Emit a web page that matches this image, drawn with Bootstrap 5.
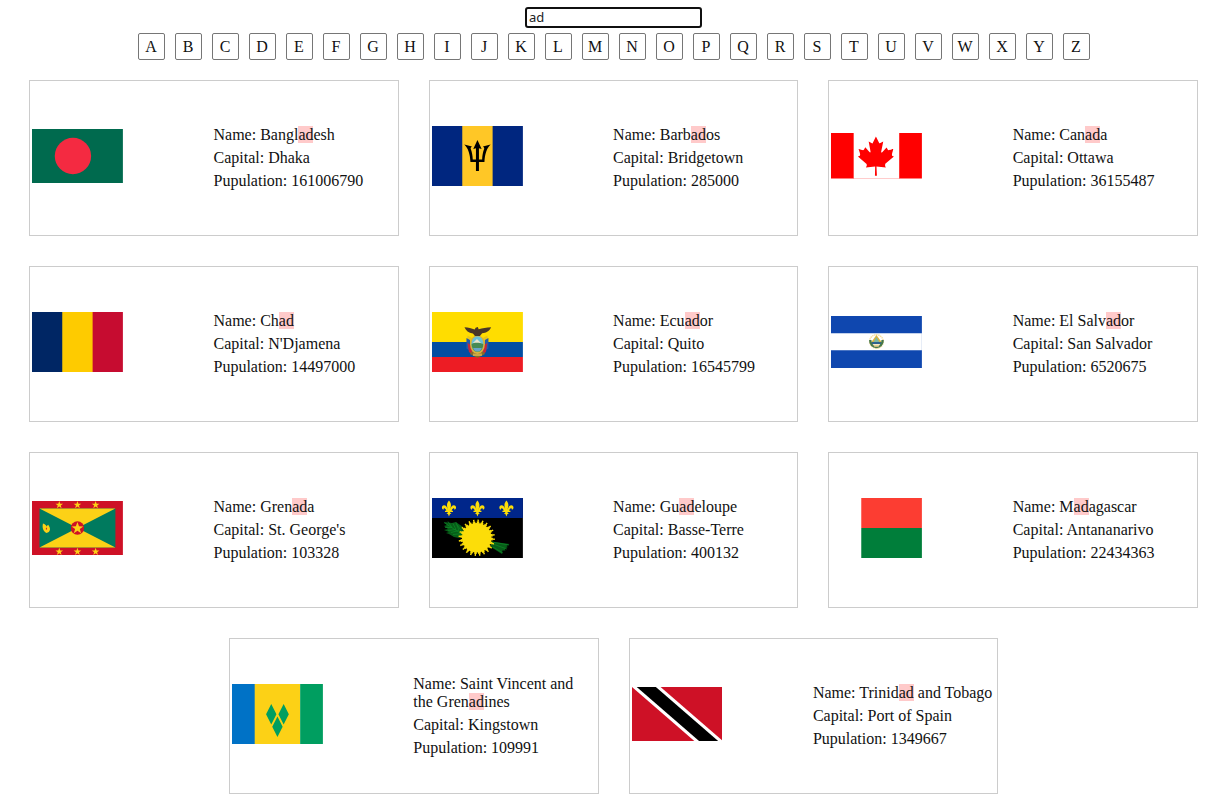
<!DOCTYPE html>
<html lang="en">
<head>
<meta charset="utf-8">
<meta name="viewport" content="width=device-width, initial-scale=1">
<title>Countries</title>
<link href="https://cdn.jsdelivr.net/npm/bootstrap@5.3.0/dist/css/bootstrap.min.css" rel="stylesheet">
<style>
body { font-family: "Liberation Serif", serif; font-size: 16px; line-height: 18px; color: #111; background: #fff; overflow: hidden; }
.search-box { width: 177px; height: 21px; margin: 7px 1px 5px 0; padding: 0 2px 2px; border: 2px solid #101010; border-radius: 3px; font: 13px "Noto Sans", sans-serif; line-height: 15px; color: #222; outline: 0; }
.letters { gap: 10px; }
.letter { width: 27px; height: 27px; padding: 0 1px 0 0; border: 1px solid #767676; border-radius: 2px; background: #fff; color: #111; line-height: 25px; }
.countries { gap: 30px; margin-top: 20px; padding: 0 30.1px 0 29.1px; }
.country { width: 369.6px; height: 156px; padding: 2px; border: 1px solid #ccc; }
.flag-col { width: 181.4px; flex: none; padding-bottom: 4px; }
.flag-col svg { width: 90.9px; display: block; }
.info p { margin: 0 0 5px; }
.info p:last-child { margin: 0; }
.hit { background: #ffcaca; }
</style>
</head>
<body>
<svg width="0" height="0" class="position-absolute" aria-hidden="true">
<defs>
<path id="star" d="M0-4 1-1.3 3.8-1.2 1.5.5 2.35 3.2 0 1.6-2.35 3.2-1.5.5-3.8-1.2-1-1.3z"/>
<path id="lis" d="M0-8C-3-4.5-2-2-.8 1.8-1.8-1-2.8-3.2-5-3.2-7.6-3.2-7.8.8-5.4 1.2-5.8-1-3.5-.5-2.7 2.2H-4V3.4H-1.1C-1.2 5-2.8 5.4-2.8 5.4L-1 5.6 0 8 1 5.6 2.8 5.4S1.2 5 1.1 3.4H4V2.2H2.7C3.5-.5 5.8-1 5.4 1.2 7.8.8 7.6-3.2 5-3.2 2.8-3.2 1.8-1 .8 1.8 2-2 3-4.5 0-8z"/>
</defs>
</svg>
<header class="d-flex flex-column align-items-center">
<input class="search-box" type="text" value="ad" aria-label="Search">
<div class="letters d-flex justify-content-center">
<button class="letter">A</button><button class="letter">B</button><button class="letter">C</button><button class="letter">D</button><button class="letter">E</button><button class="letter">F</button><button class="letter">G</button><button class="letter">H</button><button class="letter">I</button><button class="letter">J</button><button class="letter">K</button><button class="letter">L</button><button class="letter">M</button><button class="letter">N</button><button class="letter">O</button><button class="letter">P</button><button class="letter">Q</button><button class="letter">R</button><button class="letter">S</button><button class="letter">T</button><button class="letter">U</button><button class="letter">V</button><button class="letter">W</button><button class="letter">X</button><button class="letter">Y</button><button class="letter">Z</button>
</div>
</header>
<main class="countries d-flex flex-wrap justify-content-center">

<article class="country d-flex align-items-center">
<div class="flag-col"><svg height="54" viewBox="0 0 91 54" preserveAspectRatio="none"><path fill="#006a4e" d="M0 0h91v54H0z"/><circle cx="41" cy="27" r="18.2" fill="#f42a41"/></svg></div>
<div class="info w-50"><p>Name: Bangl<span class="hit">ad</span>esh</p><p>Capital: Dhaka</p><p>Pupulation: 161006790</p></div>
</article>

<article class="country d-flex align-items-center">
<div class="flag-col"><svg height="60" viewBox="0 0 91 60" preserveAspectRatio="none"><path fill="#00267f" d="M0 0h91v60H0z"/><path fill="#ffc726" d="M30.3 0h30.4v60H30.3z"/><path d="M45.5 14 41.300 23l2.700-.8V33.500h-3.200c-.1-4-.8-7.500-2-10.500-.4-1.300.5-2 1.200-2.500l-7.700-1.900c4 3.900 5.700 9.400 6.200 17.400h5.500v9h3v-9h5.500c.5-8 2.200-13.500 6.200-17.400L51 20.500c.7.500 1.600 1.200 1.200 2.500-1.200 3-1.900 6.500-2 10.500H47V22.200l2.700.8z"/></svg></div>
<div class="info w-50"><p>Name: Barb<span class="hit">ad</span>os</p><p>Capital: Bridgetown</p><p>Pupulation: 285000</p></div>
</article>

<article class="country d-flex align-items-center">
<div class="flag-col"><svg height="45.5" viewBox="0 0 91 45.5" preserveAspectRatio="none"><path fill="#fff" d="M0 0h91v45.5H0z"/><path fill="#f99" d="M22 45h47v.5H22z"/><path fill="red" d="M0 0h22.7v45.5H0zM68.3 0H91v45.5H68.3z"/><path fill="red" transform="translate(.5 -9.900) scale(.141)" d="M201 232l-13.3 4.4 61.4 54c4.7 13.7-1.6 17.8-5.6 25l66.6-8.4-1.6 67 13.9-.3-3.1-66.6 66.7 8c-4.1-8.7-7.8-13.3-4-27.2l61.3-51-10.7-4c-8.8-6.8 3.8-32.6 5.6-48.9 0 0-35.7 12.3-38 5.8l-9.2-17.5-32.6 35.8c-3.5.9-5-.5-5.9-3.5l15-74.8-23.8 13.4c-2 .9-4 .1-5.2-2.2l-23-46-23.6 47.8c-1.8 1.7-3.6 1.9-5 .7L264 130.8l13.7 74.1c-1.1 3-3.7 3.8-6.7 2.2l-31.2-35.3c-4 6.5-6.8 17.1-12.2 19.5-5.4 2.3-23.5-4.5-35.6-7 4.2 14.8 17 39.6 9 47.7z"/></svg></div>
<div class="info w-50"><p>Name: Can<span class="hit">ad</span>a</p><p>Capital: Ottawa</p><p>Pupulation: 36155487</p></div>
</article>

<article class="country d-flex align-items-center">
<div class="flag-col"><svg height="60" viewBox="0 0 91 60" preserveAspectRatio="none"><path fill="#002664" d="M0 0h31v60H0z"/><path fill="#fecb00" d="M30.3 0h31v60h-31z"/><path fill="#c60c30" d="M60.7 0H91v60H60.7z"/></svg></div>
<div class="info w-50"><p>Name: Ch<span class="hit">ad</span></p><p>Capital: N'Djamena</p><p>Pupulation: 14497000</p></div>
</article>

<article class="country d-flex align-items-center">
<div class="flag-col"><svg height="60" viewBox="0 0 91 60" preserveAspectRatio="none"><path fill="#fd0" d="M0 0h91v30H0z"/><path fill="#034ea2" d="M0 30h91v15H0z"/><path fill="#ed1c24" d="M0 45h91v15H0z"/>
<path fill="#e8c51c" d="M35.500 23.500 40 26l-1 12-4-2.500zM55.500 23.500 51 26l1 12 4-2.500z"/><path fill="#245ba8" d="M34.500 26 38 28l.5 11-4-2.500zM56.500 26 53 28l-.5 11 4-2.500z"/><path fill="#c5283a" d="M35.500 31 39 33l2 10-4-3zM55.500 31 52 33l-2 10 4-3z"/>
<path fill="#8a6a28" d="M39 40h13l1 2-7.500 4-7.500-4z"/><path fill="#c7a848" d="M41 41.500h9v2.500h-9z"/>
<ellipse cx="45.500" cy="32.500" rx="7.400" ry="9.500" fill="#d7b23c"/><ellipse cx="45.500" cy="32" rx="6" ry="7.800" fill="#6bc0d6"/><path fill="#e6e5cf" d="m41 31 4-4 4.500 4.500z"/><path fill="#458b55" d="M39.600 32c3-2 8-1.500 11.800 0-.2 4-1.500 6-3.500 7.500h-4.600c-2-1.500-3.500-3.500-3.700-7.500z"/><path fill="#67a5c9" d="M41 36h9l-2 3h-5z"/>
<path fill="#493727" d="M32.500 15.300c4 .3 7 1.200 10.200 2.200l1-1.700 2.200-.8.8 2.300c4-.9 7.500-2 12.500-2-1.500 3.500-5 5.800-9 6L48 24h-5l-2-2.500c-4.500-.7-7-2.700-8.500-6.200z"/></svg></div>
<div class="info w-50"><p>Name: Ecu<span class="hit">ad</span>or</p><p>Capital: Quito</p><p>Pupulation: 16545799</p></div>
</article>

<article class="country d-flex align-items-center">
<div class="flag-col"><svg height="51.5" viewBox="0 0 91 51.5" preserveAspectRatio="none"><path fill="#0f47af" d="M0 0h91v52H0z"/><path fill="#fff" d="M0 17.2h91v17H0z"/><circle cx="45.5" cy="25.500" r="6.800" fill="none" stroke="#f5dfa0" stroke-width="1.500" stroke-dasharray="1.500 .6"/><path fill="#dcb43c" d="m45.500 19 5.800 8H39.700z"/><path fill="#7db7a3" d="m45.500 21 3 5h-6z"/><path fill="none" stroke="#46784c" stroke-width="2.400" d="M39.300 24c-.5 9.300 12.900 9.300 12.400 0"/><path fill="#2f628c" d="M41 26h9v2h-9z"/><path fill="#e7cf92" d="M42 28.500h7l-1.500 2.200h-4z"/></svg></div>
<div class="info w-50"><p>Name: El Salv<span class="hit">ad</span>or</p><p>Capital: San Salvador</p><p>Pupulation: 6520675</p></div>
</article>

<article class="country d-flex align-items-center">
<div class="flag-col"><svg height="54" viewBox="0 0 91 54" preserveAspectRatio="none"><path fill="#ce1126" d="M0 0h91v54H0z"/><path fill="#007a5e" d="M7.500 7.500h76v39h-76z"/><path fill="#fcd116" d="M7.500 7.500h76l-76 39h76z"/><circle cx="45.500" cy="27" r="6.700" fill="#ce1126"/><g fill="#fcd116"><use href="#star" transform="translate(45.500 27.300) scale(1.550)"/><use href="#star" x="27.300" y="4"/><use href="#star" x="45.500" y="4"/><use href="#star" x="63.700" y="4"/><use href="#star" x="27.300" y="50.700"/><use href="#star" x="45.500" y="50.700"/><use href="#star" x="63.700" y="50.700"/><path d="M11 22.500c2 .7 3 1.500 3.700 3 .3-.7.800-1.200 1.500-1.700 3 4 2.200 7.400-1.700 8.200C11 30 10 26.500 11 22.500z"/></g><path fill="#ce1126" d="M13.700 28 15 26.200v2.500z"/></svg></div>
<div class="info w-50"><p>Name: Gren<span class="hit">ad</span>a</p><p>Capital: St. George's</p><p>Pupulation: 103328</p></div>
</article>

<article class="country d-flex align-items-center">
<div class="flag-col"><svg height="60" viewBox="0 0 91 60" preserveAspectRatio="none"><path d="M0 0h91v60H0z"/><path fill="#00268a" d="M0 0h91v20H0z"/><g fill="#fcdd09"><use href="#lis" x="17" y="10.500"/><use href="#lis" x="45.500" y="10.500"/><use href="#lis" x="74.500" y="10.500"/></g>
<path fill="#075c18" d="m12 24 8 1 4-1 7 5 2 8-6 3-5-1-5-3-3-1 3-1-5-2 4-1-4-3 3-1zM59 43.500l18.500 2.500-3 2 1.500 1-3 1.500.5 2-3 0-.5 3.500-11-7z"/>
<path fill="none" stroke="#0b8a26" stroke-width=".7" d="m12 24.500 20 13m-16-14 4 6-7 0m8-4 3 6-8 1m8-8 3 8-8 2m6-8 6 9-10 1M60 44l17 3m-16-1 14 5m-14-2 10 6"/>
<circle cx="44.800" cy="39.800" r="14.800" fill="#fcdd09"/><circle cx="44.800" cy="39.800" r="15.200" fill="none" stroke="#fcdd09" stroke-width="2" pathLength="96" stroke-dasharray="2.600 1.400"/><circle cx="44.800" cy="39.800" r="17" fill="none" stroke="#fcdd09" stroke-width="2.400" pathLength="96" stroke-dasharray="1.300 2.700" stroke-dashoffset="-.65"/></svg></div>
<div class="info w-50"><p>Name: Gu<span class="hit">ad</span>eloupe</p><p>Capital: Basse-Terre</p><p>Pupulation: 400132</p></div>
</article>

<article class="country d-flex align-items-center">
<div class="flag-col"><svg height="60" viewBox="0 0 91 60" preserveAspectRatio="none"><path fill="#fff" d="M0 0h31v60H0z"/><path fill="#fc3d32" d="M30.300 0H91v30H30.300z"/><path fill="#007e3a" d="M30.300 30H91v30H30.300z"/></svg></div>
<div class="info w-50"><p>Name: M<span class="hit">ad</span>agascar</p><p>Capital: Antananarivo</p><p>Pupulation: 22434363</p></div>
</article>

<article class="country d-flex align-items-center">
<div class="flag-col"><svg height="60" viewBox="0 0 91 60" preserveAspectRatio="none"><path fill="#0072c6" d="M0 0h23v60H0z"/><path fill="#fcd116" d="M22.750 0h45.500v60h-45.500z"/><path fill="#009e60" d="M68.250 0H91v60H68.250zM39.300 20l5.200 10.300-5.200 10.300-5.200-10.300zM51.700 20l5.200 10.300-5.200 10.300-5.200-10.300zM45.500 32.500l5.200 10.300-5.200 10.300-5.200-10.300z"/></svg></div>
<div class="info w-50"><p>Name: Saint Vincent and the Gren<span class="hit">ad</span>ines</p><p>Capital: Kingstown</p><p>Pupulation: 109991</p></div>
</article>

<article class="country d-flex align-items-center">
<div class="flag-col"><svg height="54" viewBox="0 0 90 54" preserveAspectRatio="none"><path fill="#ce1126" d="M0 0h90v54H0z"/><path fill="#fff" d="M0 0h28.300L90 54H61.700z"/><path d="M4.700 0h18.900l61.700 54H66.400z"/></svg></div>
<div class="info w-50"><p>Name: Trinid<span class="hit">ad</span> and Tobago</p><p>Capital: Port of Spain</p><p>Pupulation: 1349667</p></div>
</article>
</main>
<script src="https://cdn.jsdelivr.net/npm/bootstrap@5.3.0/dist/js/bootstrap.bundle.min.js"></script>
</body>
</html>
